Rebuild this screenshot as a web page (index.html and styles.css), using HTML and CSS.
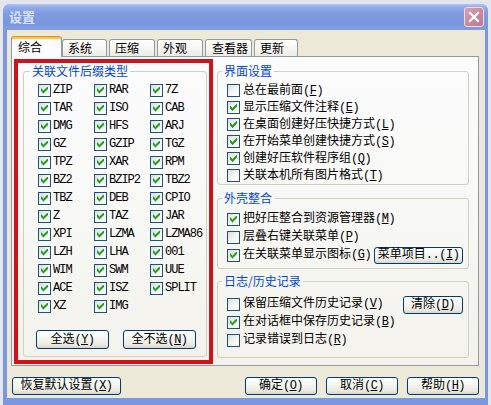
FILE: index.html
```html
<!DOCTYPE html>
<html lang="zh-CN">
<head>
<meta charset="utf-8">
<title>设置</title>
<link rel="stylesheet" href="styles.css">
</head>
<body>
<div class="window">
  <div class="titlebar">
    <span class="title">设置</span>
    <span class="close"><svg width="12" height="12" viewBox="0 0 12 12"><path d="M2 2L10 10M10 2L2 10" stroke="#fff" stroke-width="2.2" stroke-linecap="square"/></svg></span>
  </div>
  <div class="client">
    <div class="tabs">
      <div class="tab sel">综合</div>
      <div class="tab">系统</div>
      <div class="tab">压缩</div>
      <div class="tab">外观</div>
      <div class="tab">查看器</div>
      <div class="tab">更新</div>
    </div>
    <div class="panel">
      <fieldset class="group left">
        <legend>关联文件后缀类型</legend>
        <div class="exts">
          <label class="cb"><span class="box on"></span><span class="ext">ZIP</span></label>
          <label class="cb"><span class="box on"></span><span class="ext">RAR</span></label>
          <label class="cb"><span class="box on"></span><span class="ext">7Z</span></label>
          <label class="cb"><span class="box on"></span><span class="ext">TAR</span></label>
          <label class="cb"><span class="box on"></span><span class="ext">ISO</span></label>
          <label class="cb"><span class="box on"></span><span class="ext">CAB</span></label>
          <label class="cb"><span class="box on"></span><span class="ext">DMG</span></label>
          <label class="cb"><span class="box on"></span><span class="ext">HFS</span></label>
          <label class="cb"><span class="box on"></span><span class="ext">ARJ</span></label>
          <label class="cb"><span class="box on"></span><span class="ext">GZ</span></label>
          <label class="cb"><span class="box on"></span><span class="ext">GZIP</span></label>
          <label class="cb"><span class="box on"></span><span class="ext">TGZ</span></label>
          <label class="cb"><span class="box on"></span><span class="ext">TPZ</span></label>
          <label class="cb"><span class="box on"></span><span class="ext">XAR</span></label>
          <label class="cb"><span class="box on"></span><span class="ext">RPM</span></label>
          <label class="cb"><span class="box on"></span><span class="ext">BZ2</span></label>
          <label class="cb"><span class="box on"></span><span class="ext">BZIP2</span></label>
          <label class="cb"><span class="box on"></span><span class="ext">TBZ2</span></label>
          <label class="cb"><span class="box on"></span><span class="ext">TBZ</span></label>
          <label class="cb"><span class="box on"></span><span class="ext">DEB</span></label>
          <label class="cb"><span class="box on"></span><span class="ext">CPIO</span></label>
          <label class="cb"><span class="box on"></span><span class="ext">Z</span></label>
          <label class="cb"><span class="box on"></span><span class="ext">TAZ</span></label>
          <label class="cb"><span class="box on"></span><span class="ext">JAR</span></label>
          <label class="cb"><span class="box on"></span><span class="ext">XPI</span></label>
          <label class="cb"><span class="box on"></span><span class="ext">LZMA</span></label>
          <label class="cb"><span class="box on"></span><span class="ext">LZMA86</span></label>
          <label class="cb"><span class="box on"></span><span class="ext">LZH</span></label>
          <label class="cb"><span class="box on"></span><span class="ext">LHA</span></label>
          <label class="cb"><span class="box on"></span><span class="ext">001</span></label>
          <label class="cb"><span class="box on"></span><span class="ext">WIM</span></label>
          <label class="cb"><span class="box on"></span><span class="ext">SWM</span></label>
          <label class="cb"><span class="box on"></span><span class="ext">UUE</span></label>
          <label class="cb"><span class="box on"></span><span class="ext">ACE</span></label>
          <label class="cb"><span class="box on"></span><span class="ext">ISZ</span></label>
          <label class="cb"><span class="box on"></span><span class="ext">SPLIT</span></label>
          <label class="cb"><span class="box on"></span><span class="ext">XZ</span></label>
          <label class="cb"><span class="box on"></span><span class="ext">IMG</span></label>
        </div>
        <div class="btnrow">
          <button class="btn w73">全选<span class="k">(<u>Y</u>)</span></button>
          <button class="btn w73">全不选<span class="k">(<u>N</u>)</span></button>
        </div>
      </fieldset>

      <div class="rightcol">
        <fieldset class="group g1">
          <legend>界面设置</legend>
          <div class="rows">
            <label class="row"><span class="box"></span><span>总在最前面<span class="k">(<u>F</u>)</span></span></label>
            <label class="row"><span class="box on"></span><span>显示压缩文件注释<span class="k">(<u>E</u>)</span></span></label>
            <label class="row"><span class="box on"></span><span>在桌面创建好压快捷方式<span class="k">(<u>L</u>)</span></span></label>
            <label class="row"><span class="box on"></span><span>在开始菜单创建快捷方式<span class="k">(<u>S</u>)</span></span></label>
            <label class="row"><span class="box on"></span><span>创建好压软件程序组<span class="k">(<u>Q</u>)</span></span></label>
            <label class="row"><span class="box"></span><span>关联本机所有图片格式<span class="k">(<u>T</u>)</span></span></label>
          </div>
        </fieldset>
        <fieldset class="group g2">
          <legend>外壳整合</legend>
          <div class="rows">
            <label class="row"><span class="box on"></span><span>把好压整合到资源管理器<span class="k">(<u>M</u>)</span></span></label>
            <label class="row"><span class="box"></span><span>层叠右键关联菜单<span class="k">(<u>P</u>)</span></span></label>
            <div class="row"><span class="box on"></span><span>在关联菜单显示图标<span class="k">(<u>G</u>)</span></span><button class="btn menu">菜单项目<span class="k">..(<u>I</u>)</span></button></div>
          </div>
        </fieldset>
        <fieldset class="group g3">
          <legend>日志/历史记录</legend>
          <div class="rows">
            <div class="row"><span class="box"></span><span>保留压缩文件历史记录<span class="k">(<u>V</u>)</span></span><button class="btn clear">清除<span class="k">(<u>D</u>)</span></button></div>
            <label class="row"><span class="box on"></span><span>在对话框中保存历史记录<span class="k">(<u>B</u>)</span></span></label>
            <label class="row"><span class="box"></span><span>记录错误到日志<span class="k">(<u>R</u>)</span></span></label>
          </div>
        </fieldset>
      </div>

      <div class="redframe"></div>
    </div>
    <div class="bottom">
      <button class="btn reset">恢复默认设置<span class="k">(<u>X</u>)</span></button>
      <button class="btn w72">确定<span class="k">(<u>O</u>)</span></button>
      <button class="btn w72">取消<span class="k">(<u>C</u>)</span></button>
      <button class="btn w72">帮助<span class="k">(<u>H</u>)</span></button>
    </div>
  </div>
</div>
</body>
</html>
```

FILE: styles.css
```css
html, body {
  margin: 0;
  padding: 0;
  overflow: hidden;
}

body {
  background: #e3e6ed;
  font-family: "Liberation Mono", "Noto Sans CJK SC", monospace;
  font-size: 12px;
  line-height: 14px;
  color: #000;
}

.window {
  margin: 4px 0 0 3px;
  width: 485px;
  height: 410px;
  border-radius: 7px 7px 0 0;
  background: #7b97df;
  display: flex;
  flex-direction: column;
}

.titlebar {
  flex: none;
  height: 26px;
  display: flex;
  align-items: center;
  justify-content: space-between;
  padding: 0 4px 0 6px;
  border-radius: 7px 7px 0 0;
  background: linear-gradient(180deg, #b4c6f2 0, #94acea 3px, #7f9ae2 10px, #7b97e0 20px, #809ce2 26px);
}

.title {
  font-family: "Noto Sans CJK SC", sans-serif;
  font-weight: bold;
  font-size: 13px;
  color: #d9e3f7;
}

.close {
  width: 20px;
  height: 20px;
  box-sizing: border-box;
  border: 1px solid #eed8e2;
  border-radius: 3px;
  background: linear-gradient(135deg, #d8a2b6 0%, #c88ba0 50%, #b97a92 100%);
  display: flex;
  align-items: center;
  justify-content: center;
}

.client {
  margin: 0 3px 0 4px;
  height: 368px;
  background: #ece9d8;
}

/* Tabs */
.tabs {
  display: flex;
  align-items: flex-end;
  height: 26px;
  box-sizing: border-box;
  padding-left: 4px;
}

.tab {
  height: 17px;
  box-sizing: border-box;
  border: 1px solid #919b9c;
  border-bottom: none;
  border-radius: 3px 3px 0 0;
  background: linear-gradient(180deg, #ffffff 0%, #f8f8f5 45%, #ecebe5 100%);
  padding-left: 5px;
  line-height: 16px;
  margin-left: 2px;
  width: 46px;
  font-family: "Noto Sans CJK SC", sans-serif;
}

.tab.sel {
  position: relative;
  z-index: 1;
  height: 21px;
  width: 51px;
  margin-left: 0;
  margin-bottom: -1px;
  padding-left: 6px;
  background: #fcfcfe;
  border-top: 1px solid #e68b2c;
  box-shadow: inset 0 2px 0 #ffc73c;
  line-height: 20px;
}

.tab:nth-child(2) { margin-left: 0; width: 45px; }
.tab:nth-child(5) { width: 47px; padding-left: 6px; }
.tab:nth-child(6) { width: 44px; }

/* Panel */
.panel {
  position: relative;
  margin-left: 4px;
  width: 468px;
  height: 310px;
  box-sizing: border-box;
  border: 1px solid #919b9c;
  background: linear-gradient(180deg, #fcfcfe 0%, #f7f7f3 60%, #f3f2ec 100%);
  display: flex;
  align-items: flex-start;
}

.group {
  margin: 0;
  padding: 0;
  min-width: 0;
  box-sizing: border-box;
  border: 1px solid #d0d0bf;
  border-radius: 3px;
}

.group legend {
  padding: 0 2px;
  margin-left: 4px;
  color: #0046d5;
  line-height: 14px;
  font-family: "Noto Sans CJK SC", sans-serif;
}

.left {
  margin: 7px 0 0 11px;
  width: 184px;
}

.left legend {
  margin-left: 6px;
}

.exts {
  display: grid;
  grid-template-columns: 56px 56px 56px;
  grid-auto-rows: 18px;
  padding: 3px 0 0 14px;
}

.cb {
  display: flex;
  align-items: center;
  gap: 2px;
}

.ext {
  letter-spacing: -1px;
}

.k {
  letter-spacing: -0.5px;
}

.k u {
  text-underline-offset: 1px;
}

.box {
  flex: none;
  width: 13px;
  height: 13px;
  box-sizing: border-box;
  border: 1px solid #1c5180;
  background: linear-gradient(135deg, #dcdcd7 0%, #f0f0ec 40%, #ffffff 85%);
  display: flex;
  align-items: center;
  justify-content: center;
}

.box.on::after {
  content: "";
  width: 7px;
  height: 7px;
  background: #21a121;
  clip-path: polygon(0 2px, 1px 2px, 1px 3px, 2px 3px, 2px 4px, 3px 4px, 3px 3px, 4px 3px, 4px 2px, 5px 2px, 5px 1px, 6px 1px, 6px 0, 7px 0, 7px 3px, 6px 3px, 6px 4px, 5px 4px, 5px 5px, 4px 5px, 4px 6px, 3px 6px, 3px 7px, 2px 7px, 2px 6px, 1px 6px, 1px 5px, 0 5px);
}

/* Buttons */
.btn {
  margin: 0;
  padding: 0;
  height: 19px;
  box-sizing: border-box;
  border: 1px solid #003c74;
  border-radius: 3px;
  background: linear-gradient(180deg, #ffffff 0%, #f6f6f2 40%, #ebe9e1 80%, #d8d3c8 100%);
  font: inherit;
  color: #000;
  display: flex;
  align-items: center;
  justify-content: center;
  white-space: nowrap;
}

.w73 { width: 73px; }
.w72 { width: 72px; height: 18px; }

.btnrow {
  display: flex;
  gap: 14px;
  padding: 15px 0 7px 12px;
}

/* Right column */
.rightcol {
  margin: 7px 0 0 10px;
  width: 252px;
  display: flex;
  flex-direction: column;
}

.rows {
  padding: 4px 0 0 9px;
}

.row {
  display: flex;
  align-items: center;
  gap: 3px;
  height: 18px;
  white-space: nowrap;
}

.g1 .row { height: 17px; }

.g2 { margin-top: 6px; }
.g2 .rows { padding: 5px 0 4px 9px; }

.g3 { margin-top: 5px; }
.g3 .rows { padding: 7px 0 8px 9px; }

.row .btn {
  margin-left: auto;
  margin-right: 5px;
}

.menu { width: 90px; height: 17px; }
.clear { width: 60px; height: 18px; position: relative; top: 1px; }

/* Annotation frame */
.redframe {
  position: absolute;
  left: 2px;
  top: 2px;
  width: 199px;
  height: 305px;
  box-sizing: border-box;
  border: 4px solid #d0121b;
}

/* Bottom buttons */
.bottom {
  display: flex;
  gap: 9px;
  padding: 11px 6px 0 5px;
}

.reset {
  width: 109px;
  height: 18px;
  margin-right: auto;
}
```
